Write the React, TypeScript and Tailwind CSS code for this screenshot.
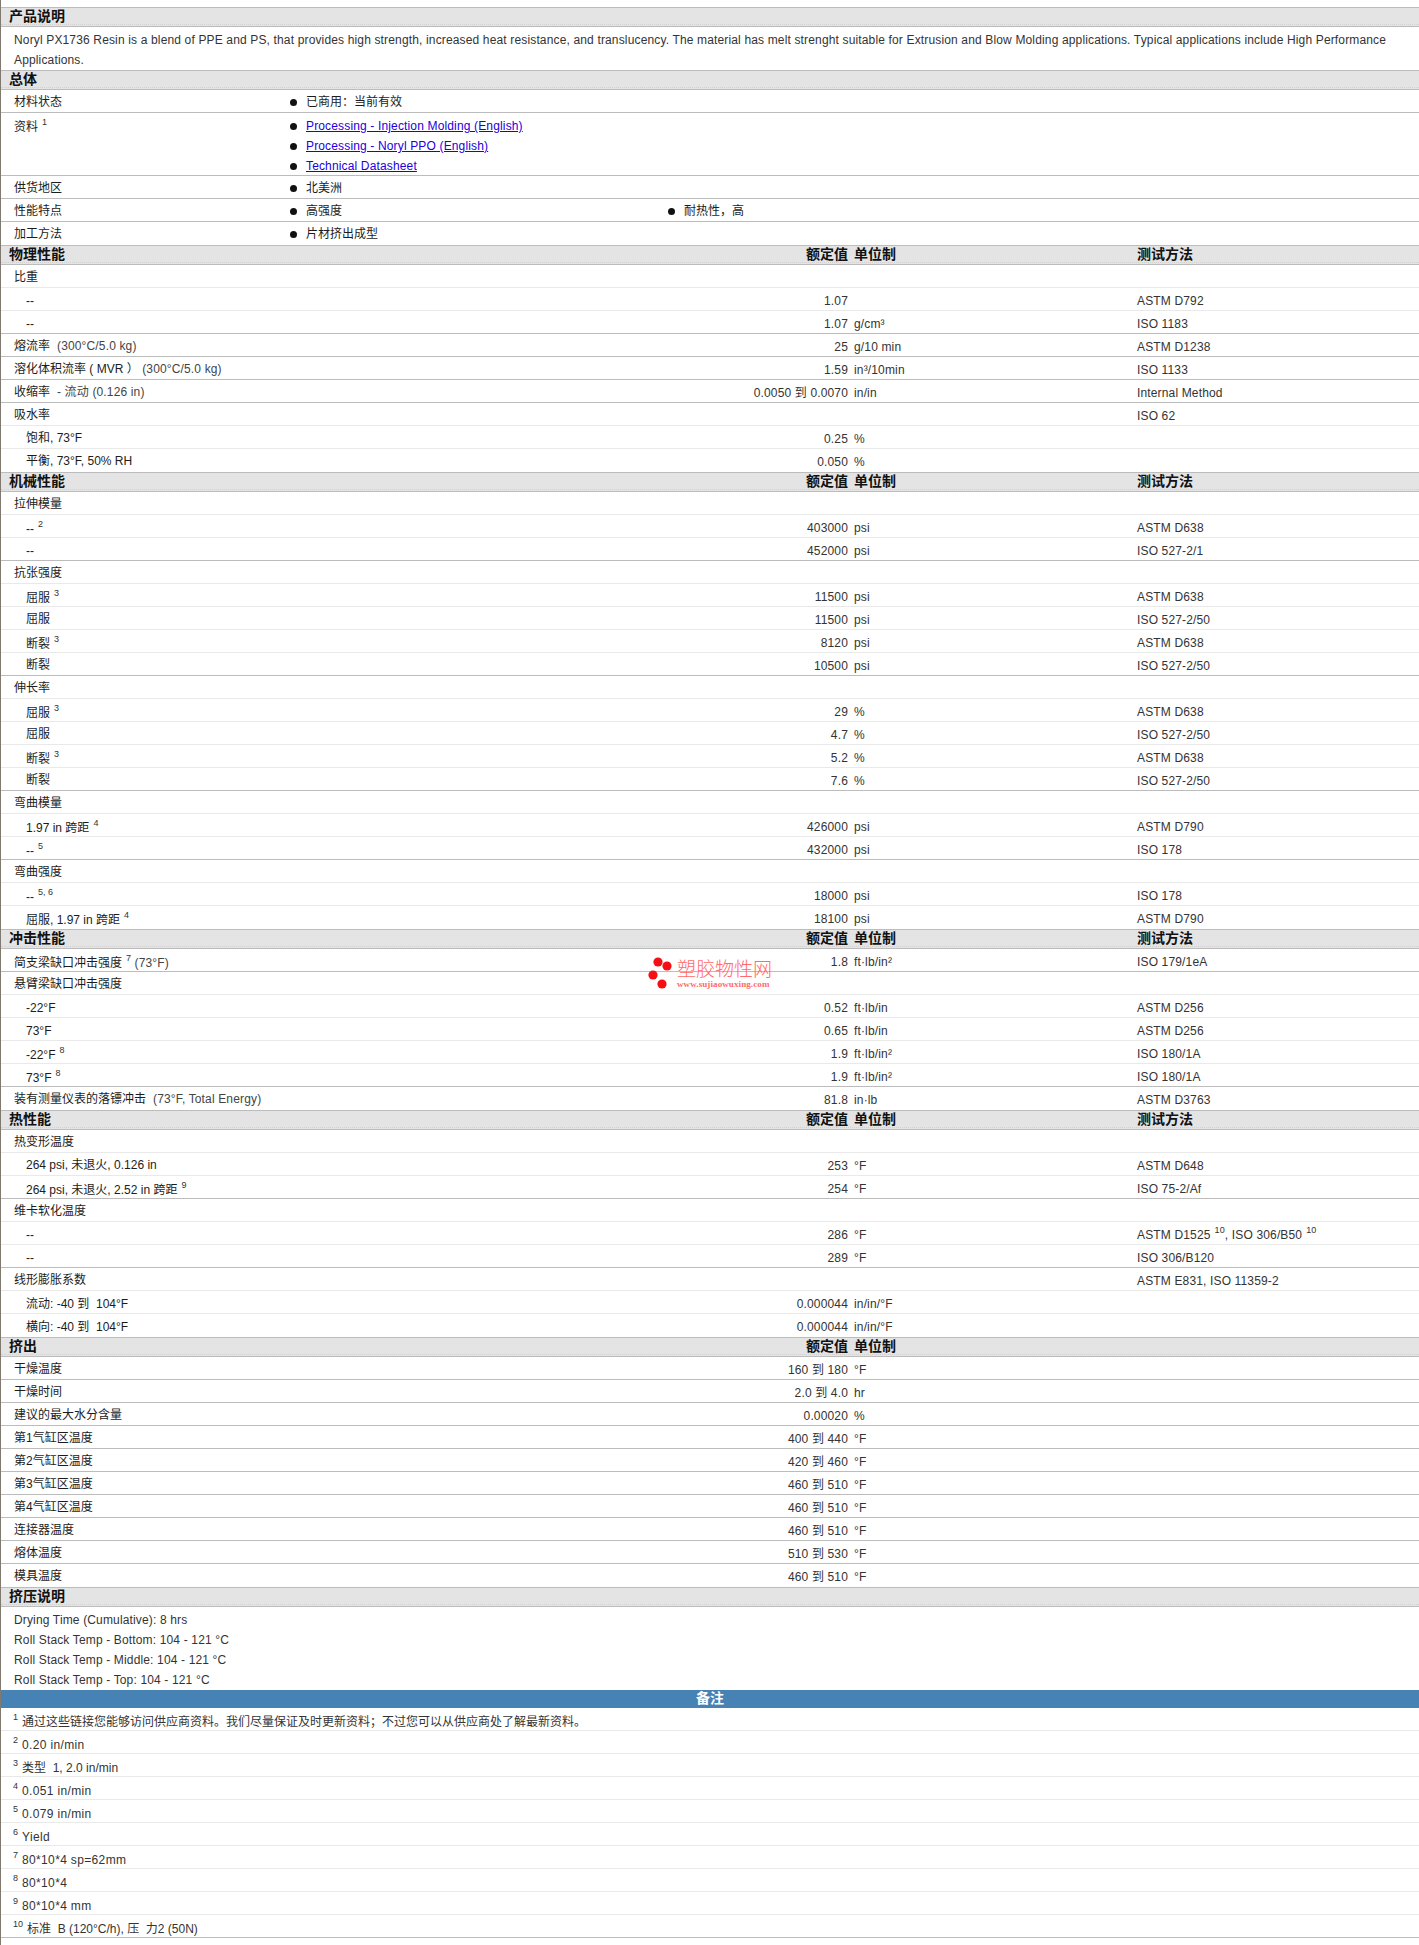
import type { ReactNode } from "react";

const FONT = "font-['Liberation_Sans','Noto_Sans_CJK_SC',sans-serif]";

type Line = "s" | "l" | "n";

const lineClass: Record<Line, string> = {
  s: "border-[#bcbcbc]",
  l: "border-[#e9e9e9]",
  n: "border-transparent",
};

const nudgeClass = ["pt-[2px]", "pt-[2px]", "pt-[3px]", "pt-[4px]"];

function Sup({ children }: { children: ReactNode }) {
  return <sup className="ml-[4px] align-[2px] text-[9px] text-[#333]">{children}</sup>;
}

function Header({ title, cols, test }: { title: string; cols?: boolean; test?: boolean }) {
  return (
    <div className="h-[20px] border-y border-[#bcbcbc] bg-[#e4e4e4]">
      <div className="flex h-[17px] items-center border-b border-dotted border-[#d2d2d2] text-[14px] font-bold leading-[17px] text-[#111]">
        <div className="w-[648px] pl-[8px]">{title}</div>
        <div className="w-[199px] text-right">{cols && "额定值"}</div>
        <div className="w-[289px] pl-[6px]">{cols && "单位制"}</div>
        <div>{test && "测试方法"}</div>
      </div>
    </div>
  );
}

function Row({
  label,
  sup,
  tail,
  value,
  unit,
  test,
  sub,
  line = "s",
  nudge = 0,
}: {
  label: ReactNode;
  sup?: string;
  tail?: string;
  value?: string;
  unit?: string;
  test?: ReactNode;
  sub?: boolean;
  line?: Line;
  nudge?: number;
}) {
  return (
    <div className={`flex h-[23px] border-b text-[12px] leading-[20px] ${lineClass[line]}`}>
      <div className={`w-[648px] whitespace-nowrap ${sub ? "pl-[25px]" : "pl-[13px]"} ${nudgeClass[sup ? 3 : nudge]}`}>
        {label}
        {sup && <Sup>{sup}</Sup>}
        {tail && <span className="tracking-[0.15px] text-[#444]">{tail}</span>}
      </div>
      <div className="w-[199px] whitespace-nowrap pt-[3px] text-right tracking-[0.15px] text-[#333]">{value}</div>
      <div className="w-[289px] whitespace-nowrap pl-[6px] pt-[3px] tracking-[0.15px] text-[#333]">{unit}</div>
      <div className="whitespace-nowrap pt-[3px] tracking-[0.15px] text-[#333]">{test}</div>
    </div>
  );
}

function Dot() {
  return <span className="h-[7px] w-[7px] shrink-0 rounded-full bg-[#111]" />;
}

function BulletRow({ label, items, line = "s" }: { label: string; items: ReactNode[]; line?: Line }) {
  return (
    <div className={`flex h-[23px] border-b pt-[2px] text-[12px] leading-[20px] ${lineClass[line]}`}>
      <div className="w-[289px] pl-[13px]">{label}</div>
      {items.map((item, i) => (
        <div key={i} className="flex h-[20px] w-[378px] items-center gap-[9px]">
          <Dot />
          <span>{item}</span>
        </div>
      ))}
    </div>
  );
}

function Doc({ children }: { children: string }) {
  return (
    <div className="flex h-[20px] items-center gap-[9px]">
      <Dot />
      <a href="#" className="tracking-[0.15px] text-[#2200dd] underline">
        {children}
      </a>
    </div>
  );
}

function Note({ n, children, line = "l", latin }: { n: string; children: ReactNode; line?: Line; latin?: boolean }) {
  return (
    <div className={`h-[23px] whitespace-nowrap border-b pl-[12px] pt-[4px] text-[12px] leading-[20px] text-[#333] ${lineClass[line]}`}>
      <sup className="mr-[4px] align-[2px] text-[9px]">{n}</sup>
      <span className={latin ? "tracking-[0.35px]" : ""}>{children}</span>
    </div>
  );
}

function Watermark() {
  return (
    <div className="absolute left-[647px] top-[955px] flex items-start gap-[3px]">
      <svg width="26" height="34" viewBox="0 0 26 34" className="mt-[1px]">
        <circle cx="10" cy="6" r="4.6" fill="#f50f14" />
        <circle cx="19" cy="10" r="4.6" fill="#f50f14" />
        <circle cx="5" cy="19" r="4.6" fill="#f50f14" />
        <circle cx="14" cy="28" r="4.6" fill="#f50f14" />
      </svg>
      <div className="mt-[5px] flex flex-col">
        <span className="text-[19px] font-light leading-[20px] text-[#ff6a6a]">塑胶物性网</span>
        <span className="font-['Liberation_Serif',serif] text-[9px] font-bold leading-[9px] tracking-[0.1px] text-[#ff6a6a]">
          www.sujiaowuxing.com
        </span>
      </div>
    </div>
  );
}

export default function App() {
  return (
    <div className={`relative h-[1945px] overflow-hidden border-l border-[#80796f] bg-white pt-[7px] text-[#1c1c1c] ${FONT}`}>
      <Watermark />

      <Header title="产品说明" />
      <div className="h-[43px] pl-[13px] pt-[3px] text-[12px] leading-[20px] tracking-[0.15px] text-[#333]">
        Noryl PX1736 Resin is a blend of PPE and PS, that provides high strength, increased heat resistance, and
        translucency. The material has melt strenght suitable for Extrusion and Blow Molding applications. Typical
        applications include High Performance Applications.
      </div>

      <Header title="总体" />
      <BulletRow label="材料状态" items={["已商用：当前有效"]} />
      <div className="flex h-[63px] border-b border-[#bcbcbc] pt-[3px] text-[12px] leading-[20px]">
        <div className="w-[289px] pl-[13px] pt-[1px]">
          资料
          <Sup>1</Sup>
        </div>
        <div className="flex flex-col">
          <Doc>Processing - Injection Molding (English)</Doc>
          <Doc>Processing - Noryl PPO (English)</Doc>
          <Doc>Technical Datasheet</Doc>
        </div>
      </div>
      <BulletRow label="供货地区" items={["北美洲"]} />
      <BulletRow label="性能特点" items={["高强度", "耐热性，高"]} />
      <BulletRow label="加工方法" items={["片材挤出成型"]} line="n" />

      <Header title="物理性能" cols test />
      <Row label="比重" line="l" />
      <Row label="--" sub nudge={2} value="1.07" test="ASTM D792" line="l" />
      <Row label="--" sub nudge={2} value="1.07" unit="g/cm³" test="ISO 1183" />
      <Row label="熔流率" tail={"\u00a0\u00a0(300°C/5.0 kg)"} value="25" unit="g/10 min" test="ASTM D1238" />
      <Row label="溶化体积流率 ( MVR ）" tail={"\u00a0(300°C/5.0 kg)"} value="1.59" unit="in³/10min" test="ISO 1133" />
      <Row label="收缩率" tail={"\u00a0\u00a0- 流动 (0.126 in)"} value={"0.0050 到\u00a00.0070"} unit="in/in" test="Internal Method" />
      <Row label="吸水率" test="ISO 62" line="l" />
      <Row label="饱和, 73°F" sub nudge={1} value="0.25" unit="%" line="l" />
      <Row label="平衡, 73°F, 50% RH" sub nudge={1} value="0.050" unit="%" line="n" />

      <Header title="机械性能" cols test />
      <Row label="拉伸模量" line="l" />
      <Row label="--" sup="2" sub value="403000" unit="psi" test="ASTM D638" line="l" />
      <Row label="--" sub nudge={2} value="452000" unit="psi" test="ISO 527-2/1" />
      <Row label="抗张强度" line="l" />
      <Row label="屈服" sup="3" sub value="11500" unit="psi" test="ASTM D638" line="l" />
      <Row label="屈服" sub value="11500" unit="psi" test="ISO 527-2/50" line="l" />
      <Row label="断裂" sup="3" sub value="8120" unit="psi" test="ASTM D638" line="l" />
      <Row label="断裂" sub value="10500" unit="psi" test="ISO 527-2/50" />
      <Row label="伸长率" line="l" />
      <Row label="屈服" sup="3" sub value="29" unit="%" test="ASTM D638" line="l" />
      <Row label="屈服" sub value="4.7" unit="%" test="ISO 527-2/50" line="l" />
      <Row label="断裂" sup="3" sub value="5.2" unit="%" test="ASTM D638" line="l" />
      <Row label="断裂" sub value="7.6" unit="%" test="ISO 527-2/50" />
      <Row label="弯曲模量" line="l" />
      <Row label="1.97 in 跨距" sup="4" sub value="426000" unit="psi" test="ASTM D790" line="l" />
      <Row label="--" sup="5" sub value="432000" unit="psi" test="ISO 178" />
      <Row label="弯曲强度" line="l" />
      <Row label="--" sup="5, 6" sub value="18000" unit="psi" test="ISO 178" line="l" />
      <Row label="屈服, 1.97 in 跨距" sup="4" sub value="18100" unit="psi" test="ASTM D790" line="n" />

      <Header title="冲击性能" cols test />
      <Row label="简支梁缺口冲击强度" sup="7" tail=" (73°F)" value="1.8" unit="ft·lb/in²" test="ISO 179/1eA" />
      <Row label="悬臂梁缺口冲击强度" line="l" />
      <Row label="-22°F" sub nudge={2} value="0.52" unit="ft·lb/in" test="ASTM D256" line="l" />
      <Row label="73°F" sub nudge={2} value="0.65" unit="ft·lb/in" test="ASTM D256" line="l" />
      <Row label="-22°F" sup="8" sub value="1.9" unit="ft·lb/in²" test="ISO 180/1A" line="l" />
      <Row label="73°F" sup="8" sub value="1.9" unit="ft·lb/in²" test="ISO 180/1A" />
      <Row label="装有测量仪表的落镖冲击" tail={"\u00a0\u00a0(73°F, Total Energy)"} value="81.8" unit="in·lb" test="ASTM D3763" line="n" />

      <Header title="热性能" cols test />
      <Row label="热变形温度" line="l" />
      <Row label="264 psi, 未退火, 0.126 in" sub nudge={1} value="253" unit="°F" test="ASTM D648" line="l" />
      <Row label="264 psi, 未退火, 2.52 in 跨距" sup="9" sub value="254" unit="°F" test="ISO 75-2/Af" />
      <Row label="维卡软化温度" line="l" />
      <Row
        label="--"
        sub
        nudge={2}
        value="286"
        unit="°F"
        test={
          <>
            ASTM D1525<Sup>10</Sup>, ISO 306/B50<Sup>10</Sup>
          </>
        }
        line="l"
      />
      <Row label="--" sub nudge={2} value="289" unit="°F" test="ISO 306/B120" />
      <Row label="线形膨胀系数" test="ASTM E831, ISO 11359-2" line="l" />
      <Row label={"流动: -40 到\u00a0\u00a0104°F"} sub nudge={2} value="0.000044" unit="in/in/°F" line="l" />
      <Row label={"横向: -40 到\u00a0\u00a0104°F"} sub nudge={2} value="0.000044" unit="in/in/°F" line="n" />

      <Header title="挤出" cols />
      <Row label="干燥温度" value={"160 到\u00a0180"} unit="°F" />
      <Row label="干燥时间" value={"2.0 到\u00a04.0"} unit="hr" />
      <Row label="建议的最大水分含量" value="0.00020" unit="%" />
      <Row label="第1气缸区温度" value={"400 到\u00a0440"} unit="°F" />
      <Row label="第2气缸区温度" value={"420 到\u00a0460"} unit="°F" />
      <Row label="第3气缸区温度" value={"460 到\u00a0510"} unit="°F" />
      <Row label="第4气缸区温度" value={"460 到\u00a0510"} unit="°F" />
      <Row label="连接器温度" value={"460 到\u00a0510"} unit="°F" />
      <Row label="熔体温度" value={"510 到\u00a0530"} unit="°F" />
      <Row label="模具温度" value={"460 到\u00a0510"} unit="°F" line="n" />

      <Header title="挤压说明" />
      <div className="h-[83px] pl-[13px] pt-[3px] text-[12px] leading-[20px] tracking-[0.15px] text-[#333]">
        <p>Drying Time (Cumulative): 8 hrs</p>
        <p>Roll Stack Temp - Bottom: 104 - 121 °C</p>
        <p>Roll Stack Temp - Middle: 104 - 121 °C</p>
        <p>Roll Stack Temp - Top: 104 - 121 °C</p>
      </div>

      <div className="h-[18px] bg-[#4682b4] text-center text-[14px] font-bold leading-[16px] text-white">备注</div>
      <Note n="1">通过这些链接您能够访问供应商资料。我们尽量保证及时更新资料；不过您可以从供应商处了解最新资料。</Note>
      <Note n="2" latin>0.20 in/min</Note>
      <Note n="3">类型&nbsp; 1, 2.0 in/min</Note>
      <Note n="4" latin>0.051 in/min</Note>
      <Note n="5" latin>0.079 in/min</Note>
      <Note n="6" latin>Yield</Note>
      <Note n="7" latin>80*10*4 sp=62mm</Note>
      <Note n="8" latin>80*10*4</Note>
      <Note n="9" latin>80*10*4 mm</Note>
      <Note n="10" line="s">
        标准&nbsp; B (120°C/h), 压&nbsp; 力2 (50N)
      </Note>
    </div>
  );
}
